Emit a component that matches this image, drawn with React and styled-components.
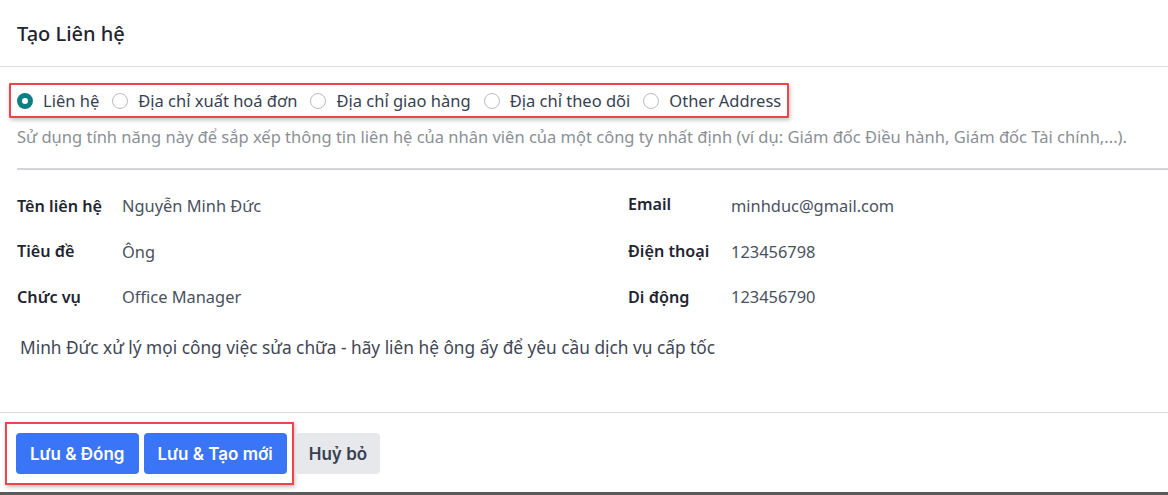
import styled, { createGlobalStyle } from "styled-components";

const GlobalStyle = createGlobalStyle`
  html, body {
    margin: 0;
    padding: 0;
    background: #ffffff;
  }
  body {
    font-family: "Noto Sans", "Open Sans", sans-serif;
    color: #374151;
    overflow: hidden;
  }
`;

const Modal = styled.div`
  width: 1168px;
  height: 492px;
  background: #fff;
  display: flex;
  flex-direction: column;
  border-bottom: 3px solid #5b5b5b;
`;

const Header = styled.div`
  height: 67px;
  box-sizing: border-box;
  padding: 0 17px;
  display: flex;
  align-items: center;
  border-bottom: 1px solid #dcdee2;
`;

const Title = styled.h1`
  margin: 0;
  font-size: 20px;
  font-weight: 500;
  color: #1f2530;
`;

const Body = styled.div`
  flex: 1;
  padding: 16px 0 0 17px;
  border-bottom: 1px solid #dcdee2;
`;

const Highlight = styled.div`
  display: inline-flex;
  margin-left: -8px;
  padding: 0 6px;
  border: 2px solid #f0444b;
  box-shadow: 1px 2px 4px rgba(0, 0, 0, 0.25);
  border-radius: 1px;
`;

const RadioGroup = styled.div`
  display: flex;
  align-items: center;
  height: 31px;
  gap: 13px;
`;

const RadioItem = styled.label`
  display: flex;
  align-items: center;
  gap: 10px;
  font-size: 16.5px;
  color: #374151;
  white-space: nowrap;
`;

const Dot = styled.span`
  width: 16px;
  height: 16px;
  box-sizing: border-box;
  border-radius: 50%;
  border: ${(p) => (p.$checked ? "5px solid #0f7f84" : "1px solid #b9bcc1")};
  background: #fff;
`;

const Help = styled.p`
  margin: 7px 0 0;
  font-size: 16.5px;
  color: #8b9096;
`;

const Divider = styled.hr`
  margin: 20px 0 0;
  border: 0;
  border-top: 2px solid #d4d5d8;
`;

const Fields = styled.div`
  display: grid;
  grid-template-columns: 611px 1fr;
  margin-top: 24px;
`;

const Column = styled.div`
  display: flex;
  flex-direction: column;
  gap: 22.5px;
`;

const Row = styled.div`
  display: grid;
  grid-template-columns: ${(p) => p.$labelWidth}px 1fr;
  align-items: center;
  height: 23px;
`;

const Label = styled.span`
  font-size: 16.2px;
  font-weight: 600;
  color: #1f2530;
  transform: translateY(${(p) => p.$shift || 0}px);
`;

const Value = styled.span`
  font-size: 16.4px;
  color: #4a5160;
`;

const Note = styled.p`
  margin: 28px 0 0 3px;
  font-size: 17.3px;
  color: #3f4654;
`;

const Footer = styled.div`
  height: 79px;
  box-sizing: border-box;
  padding: 9px 0 0 5px;
`;

const ButtonBox = styled.div`
  display: inline-flex;
  align-items: center;
  gap: 5px;
  padding: 9px 5px 9px 9px;
  border: 2px solid #f0444b;
  box-shadow: 1px 2px 4px rgba(0, 0, 0, 0.25);
`;

const Actions = styled.div`
  display: flex;
  align-items: center;
`;

const Button = styled.button`
  height: 41px;
  padding: 0 ${(p) => (p.$secondary ? 13 : 14)}px;
  border: 0;
  border-radius: 4px;
  font-family: "Inter", "Noto Sans", sans-serif;
  font-size: 17px;
  font-weight: 600;
  background: ${(p) => (p.$secondary ? "#e6e8ec" : "#3a74f7")};
  color: ${(p) => (p.$secondary ? "#374151" : "#ffffff")};
  margin-left: ${(p) => (p.$secondary ? 2 : 0)}px;
`;

const radios = [
  { label: "Liên hệ", checked: true },
  { label: "Địa chỉ xuất hoá đơn" },
  { label: "Địa chỉ giao hàng" },
  { label: "Địa chỉ theo dõi" },
  { label: "Other Address" },
];

const left = [
  ["Tên liên hệ", "Nguyễn Minh Đức"],
  ["Tiêu đề", "Ông"],
  ["Chức vụ", "Office Manager"],
];

const right = [
  ["Email", "minhduc@gmail.com"],
  ["Điện thoại", "123456798"],
  ["Di động", "123456790"],
];

export default function App() {
  return (
    <>
      <GlobalStyle />
      <Modal>
        <Header>
          <Title>Tạo Liên hệ</Title>
        </Header>
        <Body>
          <Highlight>
            <RadioGroup>
              {radios.map((r) => (
                <RadioItem key={r.label}>
                  <Dot $checked={r.checked} />
                  {r.label}
                </RadioItem>
              ))}
            </RadioGroup>
          </Highlight>
          <Help>
            Sử dụng tính năng này để sắp xếp thông tin liên hệ của nhân viên của một công ty nhất
            định (ví dụ: Giám đốc Điều hành, Giám đốc Tài chính,...).
          </Help>
          <Divider />
          <Fields>
            <Column>
              {left.map(([l, v]) => (
                <Row key={l} $labelWidth={105}>
                  <Label>{l}</Label>
                  <Value>{v}</Value>
                </Row>
              ))}
            </Column>
            <Column>
              {right.map(([l, v], i) => (
                <Row key={l} $labelWidth={103}>
                  <Label $shift={i === 0 ? -2 : 0}>{l}</Label>
                  <Value>{v}</Value>
                </Row>
              ))}
            </Column>
          </Fields>
          <Note>Minh Đức xử lý mọi công việc sửa chữa - hãy liên hệ ông ấy để yêu cầu dịch vụ cấp tốc</Note>
        </Body>
        <Footer>
          <Actions>
            <ButtonBox>
              <Button>Lưu &amp; Đóng</Button>
              <Button>Lưu &amp; Tạo mới</Button>
            </ButtonBox>
            <Button $secondary>Huỷ bỏ</Button>
          </Actions>
        </Footer>
      </Modal>
    </>
  );
}
